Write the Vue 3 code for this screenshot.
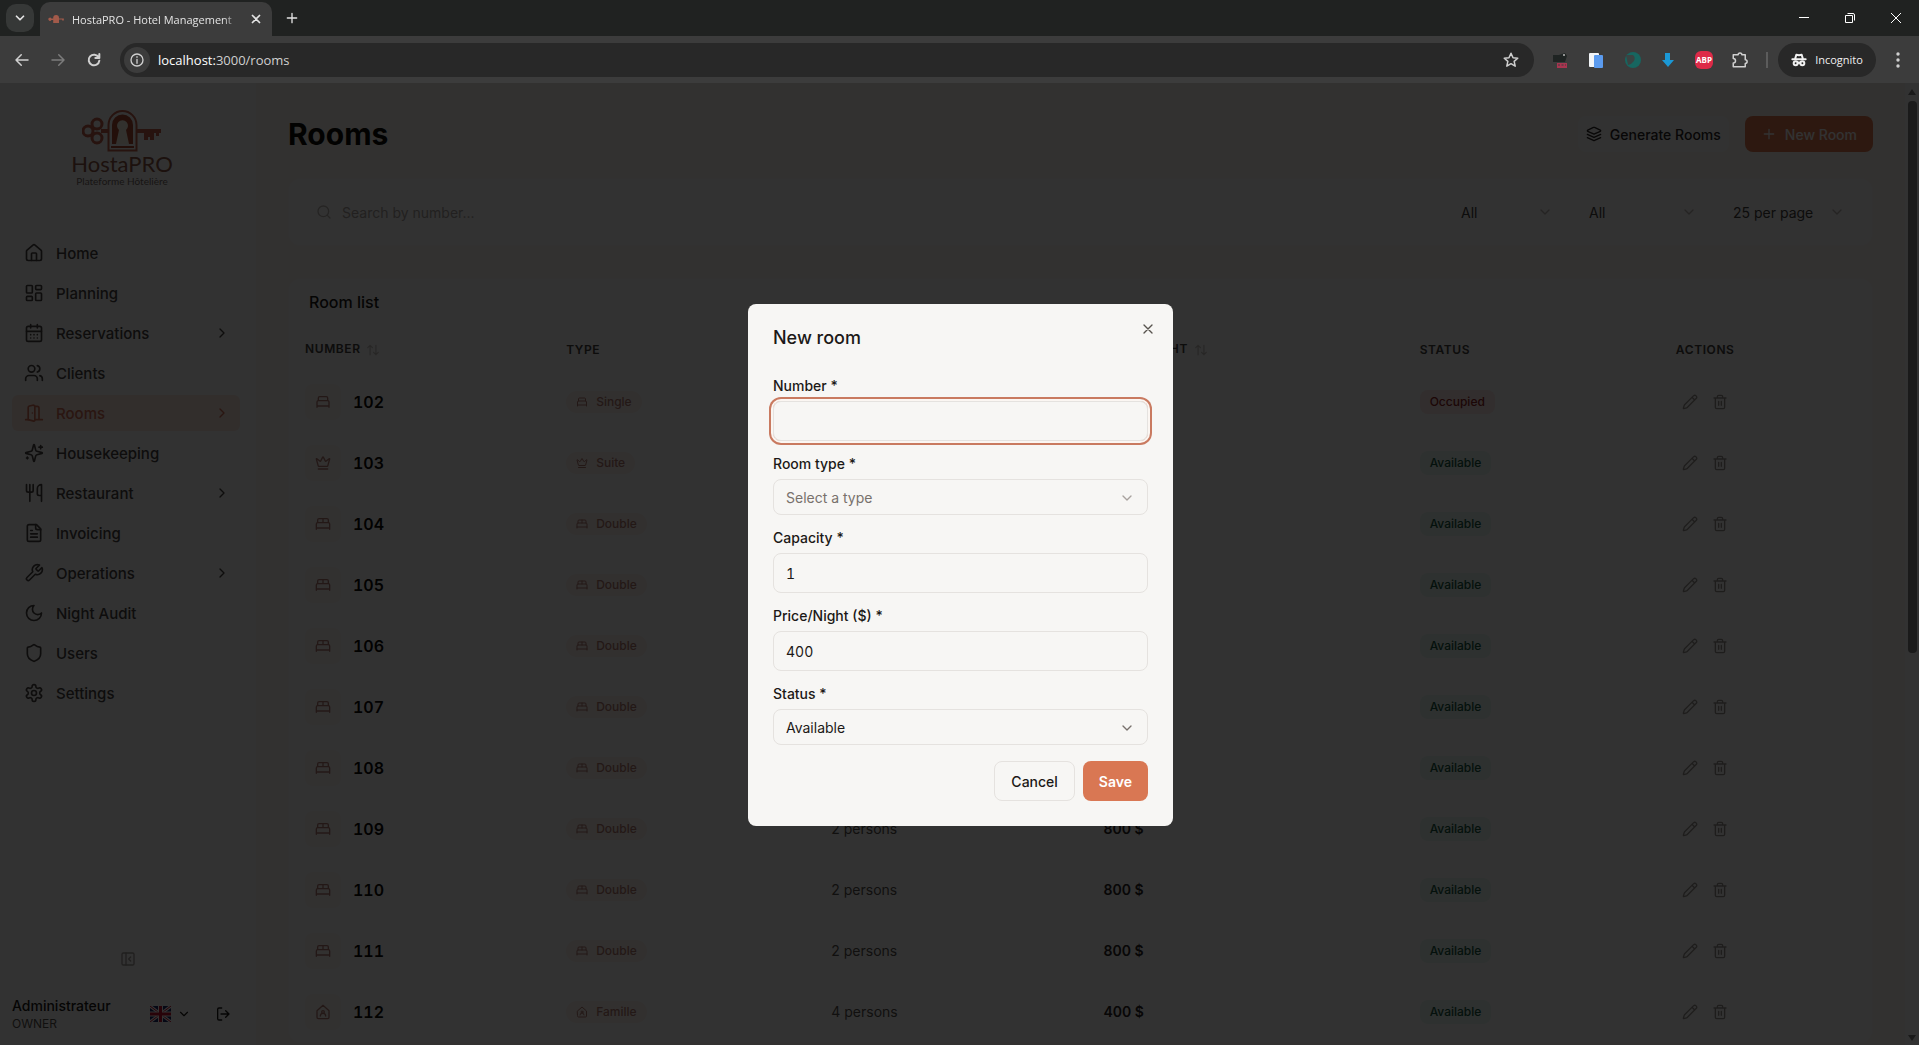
<script setup>
import { ref } from 'vue';

const icons = {
    home: '<path d="M15 21v-8a1 1 0 0 0-1-1h-4a1 1 0 0 0-1 1v8"/><path d="M3 10a2 2 0 0 1 .709-1.528l7-6a2 2 0 0 1 2.582 0l7 6A2 2 0 0 1 21 10v9a2 2 0 0 1-2 2H5a2 2 0 0 1-2-2z"/>',
    planning: '<rect width="7" height="9" x="3" y="3" rx="1"/><rect width="7" height="5" x="14" y="3" rx="1"/><rect width="7" height="9" x="14" y="12" rx="1"/><rect width="7" height="5" x="3" y="16" rx="1"/>',
    calendar: '<path d="M8 2v4M16 2v4"/><rect width="18" height="18" x="3" y="4" rx="2"/><path d="M3 10h18M8 14h.01M12 14h.01M16 14h.01M8 18h.01M12 18h.01M16 18h.01"/>',
    users: '<path d="M16 21v-2a4 4 0 0 0-4-4H6a4 4 0 0 0-4 4v2"/><circle cx="9" cy="7" r="4"/><path d="M22 21v-2a4 4 0 0 0-3-3.87M16 3.13a4 4 0 0 1 0 7.75"/>',
    door: '<path d="M13 4h3a2 2 0 0 1 2 2v14M2 20h3M13 20h9M10 12v.01"/><path d="M13 4.562v16.157a1 1 0 0 1-1.242.97L5 20V5.562a2 2 0 0 1 1.515-1.94l4-1A2 2 0 0 1 13 4.561Z"/>',
    sparkles: '<path d="M9.937 15.5A2 2 0 0 0 8.5 14.063l-6.135-1.582a.5.5 0 0 1 0-.962L8.5 9.936A2 2 0 0 0 9.937 8.5l1.582-6.135a.5.5 0 0 1 .963 0L14.063 8.5A2 2 0 0 0 15.5 9.937l6.135 1.581a.5.5 0 0 1 0 .964L15.5 14.063a2 2 0 0 0-1.437 1.437l-1.582 6.135a.5.5 0 0 1-.963 0z"/><path d="M20 3v4M22 5h-4M4 17v2M5 18H3"/>',
    utensils: '<path d="M3 2v7c0 1.1.9 2 2 2h4a2 2 0 0 0 2-2V2M7 2v20M21 15V2a5 5 0 0 0-5 5v6c0 1.1.9 2 2 2h3Zm0 0v7"/>',
    file: '<path d="M15 2H6a2 2 0 0 0-2 2v16a2 2 0 0 0 2 2h12a2 2 0 0 0 2-2V7Z"/><path d="M14 2v4a2 2 0 0 0 2 2h4M10 9H8M16 13H8M16 17H8"/>',
    wrench: '<path d="M14.7 6.3a1 1 0 0 0 0 1.4l1.6 1.6a1 1 0 0 0 1.4 0l3.77-3.77a6 6 0 0 1-7.94 7.94l-6.91 6.91a2.12 2.12 0 0 1-3-3l6.91-6.91a6 6 0 0 1 7.94-7.94l-3.76 3.76z"/>',
    moon: '<path d="M12 3a6 6 0 0 0 9 9 9 9 0 1 1-9-9Z"/>',
    shield: '<path d="M20 13c0 5-3.5 7.5-7.66 8.95a1 1 0 0 1-.67-.01C7.5 20.5 4 18 4 13V6a1 1 0 0 1 1-1c2 0 4.500-1.200 6.240-2.720a1.170 1.170 0 0 1 1.520 0C14.510 3.810 17 5 19 5a1 1 0 0 1 1 1z"/>',
    settings: '<path d="M12.220 2h-.44a2 2 0 0 0-2 2v.18a2 2 0 0 1-1 1.730l-.43.25a2 2 0 0 1-2 0l-.15-.08a2 2 0 0 0-2.730.73l-.22.38a2 2 0 0 0 .73 2.730l.15.1a2 2 0 0 1 1 1.720v.51a2 2 0 0 1-1 1.740l-.15.09a2 2 0 0 0-.73 2.730l.22.38a2 2 0 0 0 2.730.73l.15-.08a2 2 0 0 1 2 0l.43.25a2 2 0 0 1 1 1.730V20a2 2 0 0 0 2 2h.44a2 2 0 0 0 2-2v-.18a2 2 0 0 1 1-1.730l.43-.25a2 2 0 0 1 2 0l.15.08a2 2 0 0 0 2.730-.73l.22-.39a2 2 0 0 0-.73-2.730l-.15-.08a2 2 0 0 1-1-1.740v-.5a2 2 0 0 1 1-1.740l.15-.09a2 2 0 0 0 .73-2.730l-.22-.38a2 2 0 0 0-2.730-.73l-.15.08a2 2 0 0 1-2 0l-.43-.25a2 2 0 0 1-1-1.730V4a2 2 0 0 0-2-2z"/><circle cx="12" cy="12" r="3"/>',
    right: '<path d="m9 18 6-6-6-6"/>',
    down: '<path d="m6 9 6 6 6-6"/>',
    panel: '<rect width="18" height="18" x="3" y="3" rx="2"/><path d="M9 3v18M16 15l-3-3 3-3"/>',
    logout: '<path d="M10 3H6a2 2 0 0 0-2 2v14a2 2 0 0 0 2 2h4M16 17l5-5-5-5M21 12H9"/>',
    layers: '<path d="m12.830 2.180a2 2 0 0 0-1.660 0L2.600 6.080a1 1 0 0 0 0 1.830l8.580 3.910a2 2 0 0 0 1.660 0l8.580-3.900a1 1 0 0 0 0-1.830Z"/><path d="m22 12.500-9.170 4.160a2 2 0 0 1-1.660 0L2 12.500M22 17.500l-9.170 4.160a2 2 0 0 1-1.660 0L2 17.500"/>',
    plus: '<path d="M5 12h14M12 5v14"/>',
    search: '<circle cx="11" cy="11" r="8"/><path d="m21 21-4.300-4.300"/>',
    sort: '<path d="m3 8 4-4 4 4M7 4v16M13 16l4 4 4-4M17 20V4"/>',
    bedSingle: '<path d="M3 20v-8a2 2 0 0 1 2-2h14a2 2 0 0 1 2 2v8M5 10V6a2 2 0 0 1 2-2h10a2 2 0 0 1 2 2v4M3 18h18"/>',
    bedDouble: '<path d="M2 20v-8a2 2 0 0 1 2-2h16a2 2 0 0 1 2 2v8M4 10V6a2 2 0 0 1 2-2h12a2 2 0 0 1 2 2v4M12 4v6M2 18h20"/>',
    crown: '<path d="M11.560 3.270a.5.5 0 0 1 .88 0l2.950 5.600a1 1 0 0 0 1.520.29l4.280-3.660a.5.5 0 0 1 .8.520l-2.840 10.250a1 1 0 0 1-.95.730H5.810a1 1 0 0 1-.96-.73L2.020 6.020a.5.5 0 0 1 .8-.52l4.280 3.660a1 1 0 0 0 1.520-.29zM5 21h14"/>',
    family: '<path d="M3 10l9-8 9 8v10a2 2 0 0 1-2 2H5a2 2 0 0 1-2-2z"/><circle cx="12" cy="12" r="2"/><path d="M8 18a4 4 0 0 1 8 0"/>',
    pencil: '<path d="M21.170 6.810a1 1 0 0 0-3.980-3.980L3.840 16.170a2 2 0 0 0-.5.830l-1.320 4.350a.5.5 0 0 0 .62.620l4.350-1.320a2 2 0 0 0 .83-.5zM15 5l4 4"/>',
    trash: '<path d="M3 6h18M19 6v14a2 2 0 0 1-2 2H7a2 2 0 0 1-2-2V6M8 6V4a2 2 0 0 1 2-2h4a2 2 0 0 1 2 2v2M10 11v6M14 11v6"/>',
    close: '<path d="M18 6 6 18M6 6l12 12"/>',
    back: '<path d="M20 12H4M11 5l-7 7 7 7"/>',
    forward: '<path d="M4 12h16M13 5l7 7-7 7"/>',
    reload: '<path d="M19 8a8 8 0 1 0 1 5M20 3v6h-6"/>',
    info: '<circle cx="12" cy="12" r="9"/><path d="M12 11v6M12 7v1"/>',
    star: '<path d="m12 3 2.700 6 6.300.6-4.800 4.300 1.400 6.300L12 16.900l-5.600 3.300 1.400-6.300L3 9.600 9.300 9z"/>',
    puzzle: '<path d="M3 5h6.500a2.500 2.500 0 0 1 5 0H19v6.500a2.500 2.500 0 0 1 0 5V21H3v-5a3 3 0 0 0 0-6z"/>',
    incognito: '<path d="M2 11h20M6 11l2-7 4 1 4-1 2 7"/><circle cx="7" cy="17" r="3"/><circle cx="17" cy="17" r="3"/><path d="M10 17q2-2 4 0"/>'
};

const menu = [
    { label: 'Home', icon: 'home' },
    { label: 'Planning', icon: 'planning' },
    { label: 'Reservations', icon: 'calendar', sub: true },
    { label: 'Clients', icon: 'users' },
    { label: 'Rooms', icon: 'door', sub: true, active: true },
    { label: 'Housekeeping', icon: 'sparkles' },
    { label: 'Restaurant', icon: 'utensils', sub: true },
    { label: 'Invoicing', icon: 'file' },
    { label: 'Operations', icon: 'wrench', sub: true },
    { label: 'Night Audit', icon: 'moon' },
    { label: 'Users', icon: 'shield' },
    { label: 'Settings', icon: 'settings' }
];

const double = { type: 'Double', icon: 'bedDouble', persons: '2 persons', price: '800 $', status: 'Available' };

const rooms = [
    { number: 102, type: 'Single', icon: 'bedSingle', persons: '1 person', price: '400 $', status: 'Occupied' },
    { number: 103, type: 'Suite', icon: 'crown', persons: '2 persons', price: '800 $', status: 'Available' },
    ...[104, 105, 106, 107, 108, 109, 110, 111].map((number) => ({ number, ...double })),
    { number: 112, type: 'Famille', icon: 'family', persons: '4 persons', price: '400 $', status: 'Available' }
];

const search = ref('');
const form = ref({ number: '', type: '', capacity: '1', price: '400', status: 'Available' });
</script>

<template>
    <div class="browser">
        <!-- Tab strip -->
        <header class="tabs">
            <button class="tab-search" aria-label="Search tabs">
                <svg class="icon s14 bold" viewBox="0 0 24 24" v-html="icons.down"></svg>
            </button>
            <div class="tab">
                <svg class="favicon" viewBox="0 0 80 42" aria-hidden="true">
                    <path d="M26 41V15a14 14 0 0 1 29 0v26zM55 18h24v10h-8v-4H55zM26 18H17a8 8 0 1 0 0 8h9z" />
                </svg>
                <span class="tab-title">HostaPRO - Hotel Management</span>
                <button class="tab-close" aria-label="Close tab">
                    <svg class="icon s14 bold" viewBox="0 0 24 24" v-html="icons.close"></svg>
                </button>
            </div>
            <button class="tab-new" aria-label="New tab">
                <svg class="icon s16" viewBox="0 0 24 24" v-html="icons.plus"></svg>
            </button>
            <div class="window-controls">
                <button aria-label="Minimize"><svg viewBox="0 0 12 12"><path d="M1 5.500h10" /></svg></button>
                <button aria-label="Restore"><svg viewBox="0 0 12 12"><path d="M1.500 3.500h7v7h-7zM3.500 1.500H9a1.500 1.500 0 0 1 1.500 1.500v5.500" /></svg></button>
                <button aria-label="Close window"><svg viewBox="0 0 12 12"><path d="m1 1 10 10M11 1 1 11" /></svg></button>
            </div>
        </header>

        <!-- Address bar -->
        <div class="toolbar">
            <button aria-label="Back"><svg class="icon s18" viewBox="0 0 24 24" v-html="icons.back"></svg></button>
            <button aria-label="Forward" class="faded"><svg class="icon s18" viewBox="0 0 24 24" v-html="icons.forward"></svg></button>
            <button aria-label="Reload"><svg class="icon s16 bold" viewBox="0 0 24 24" v-html="icons.reload"></svg></button>
            <div class="omnibox">
                <span class="site-info"><svg class="icon s16" viewBox="0 0 24 24" v-html="icons.info"></svg></span>
                <span class="url"><b>localhost:</b>3000/rooms</span>
                <button aria-label="Bookmark"><svg class="icon s18" viewBox="0 0 24 24" v-html="icons.star"></svg></button>
            </div>
            <button aria-label="Capture extension">
                <svg class="s18" viewBox="0 0 18 18"><path d="M2 4h6l6-2 2 3-2 6H2z" fill="#1f2423" /><circle cx="13" cy="4" r="1" fill="#b8b8b8" /><path d="M6 12h10v5H6z" fill="#a83550" /><path d="M7 14h2M10.500 14h2M14 14h1" stroke="#3c3c3c" /></svg>
            </button>
            <button aria-label="Translate extension">
                <svg class="s18" viewBox="0 0 18 18"><rect x="2" y="2" width="10" height="14" rx="1" fill="#f2f5f8" /><rect x="7" y="4" width="9" height="13" rx="1" fill="#5b9bef" /></svg>
            </button>
            <button aria-label="Dark mode extension">
                <svg class="s18" viewBox="0 0 18 18"><circle cx="10" cy="9" r="8" fill="#176660" /><path d="M10 4a5 5 0 0 1 1 6q-2 3-6 4L3 4z" fill="#3a4342" /></svg>
            </button>
            <button aria-label="Downloads extension">
                <svg class="s18" viewBox="0 0 18 18"><path d="M6 2h5v7h4l-6 7-6-7h3z" fill="#1b98d5" /></svg>
            </button>
            <button aria-label="Ad blocker" class="abp">ABP</button>
            <button aria-label="Extensions"><svg class="icon s18" viewBox="0 0 24 24" v-html="icons.puzzle"></svg></button>
            <span class="divider"></span>
            <button class="incognito">
                <svg class="icon s16 bold" viewBox="0 0 24 24" v-html="icons.incognito"></svg>
                Incognito
            </button>
            <button aria-label="Menu">
                <svg class="s18" viewBox="0 0 18 18" fill="#d0d0d0"><circle cx="9" cy="3" r="1.700" /><circle cx="9" cy="9" r="1.700" /><circle cx="9" cy="15" r="1.700" /></svg>
            </button>
        </div>

        <div class="viewport">
            <aside class="sidebar">
                <div class="logo">
                    <svg viewBox="0 0 80 42" aria-hidden="true">
                        <g fill="none" stroke="#c0604a" stroke-width="3">
                            <circle cx="6" cy="21" r="5" />
                            <circle cx="15" cy="14" r="5" />
                            <circle cx="15" cy="28" r="5" />
                        </g>
                        <path d="M19 19h8v4h-8zM54 19h25v4h-2v3h-3v-3h-2v7h-4v-3h-2v3h-4v-7h-8z" fill="#c0604a" />
                        <path d="M26.500 40.500V15a14 14 0 0 1 28 0v25.500z" fill="none" stroke="#c0604a" stroke-width="2" />
                        <path d="M30 34V15a10.500 10.500 0 0 1 21 0v19zM29 36h23v2H29z" fill="#b04e36" />
                        <path d="M37 20a5.500 5.500 0 1 1 7 0l3 14H34z" fill="#faf4e4" />
                    </svg>
                    <span class="brand">HostaPRO</span>
                    <span class="tagline">Plateforme Hôtelière</span>
                </div>
                <nav class="menu">
                    <a v-for="item in menu" :key="item.label" href="#" :class="{ active: item.active }">
                        <svg class="icon s20" viewBox="0 0 24 24" v-html="icons[item.icon]"></svg>
                        <span>{{ item.label }}</span>
                        <svg v-if="item.sub" class="icon s16" viewBox="0 0 24 24" v-html="icons.right"></svg>
                    </a>
                </nav>
                <button class="collapse" aria-label="Collapse sidebar">
                    <svg class="icon s16" viewBox="0 0 24 24" v-html="icons.panel"></svg>
                </button>
                <div class="account">
                    <div class="who">
                        <strong>Administrateur</strong>
                        <span>OWNER</span>
                    </div>
                    <button class="lang" aria-label="Language">
                        <svg class="flag" viewBox="0 0 21 16">
                            <path d="M0 0h21v16H0z" fill="#1b2a6b" />
                            <path d="m0 0 21 16M21 0 0 16" stroke="#fff" stroke-width="3" />
                            <path d="m0 0 21 16M21 0 0 16" stroke="#c8102e" />
                            <path d="M10.500 0v16M0 8h21" stroke="#fff" stroke-width="5" />
                            <path d="M10.500 0v16M0 8h21" stroke="#c8102e" stroke-width="3" />
                        </svg>
                        <svg class="icon s14" viewBox="0 0 24 24" v-html="icons.down"></svg>
                    </button>
                    <button class="logout" aria-label="Log out">
                        <svg class="icon s16" viewBox="0 0 24 24" v-html="icons.logout"></svg>
                    </button>
                </div>
            </aside>

            <main class="content">
                <div class="page-head">
                    <h1>Rooms</h1>
                    <button class="btn plain">
                        <svg class="icon s16" viewBox="0 0 24 24" v-html="icons.layers"></svg>
                        Generate Rooms
                    </button>
                    <button class="btn solid">
                        <svg class="icon s16" viewBox="0 0 24 24" v-html="icons.plus"></svg>
                        New Room
                    </button>
                </div>

                <div class="card filters">
                    <label class="search">
                        <svg class="icon s16" viewBox="0 0 24 24" v-html="icons.search"></svg>
                        <input v-model="search" type="text" placeholder="Search by number..." />
                    </label>
                    <div class="filter type-filter">
                        <select aria-label="Type"><option>All</option></select>
                        <svg class="icon s16" viewBox="0 0 24 24" v-html="icons.down"></svg>
                    </div>
                    <div class="filter status-filter">
                        <select aria-label="Status"><option>All</option></select>
                        <svg class="icon s16" viewBox="0 0 24 24" v-html="icons.down"></svg>
                    </div>
                    <div class="filter page-filter">
                        <select aria-label="Page size"><option>25 per page</option></select>
                        <svg class="icon s16" viewBox="0 0 24 24" v-html="icons.down"></svg>
                    </div>
                </div>

                <section class="card list">
                    <h2>Room list</h2>
                    <table>
                        <colgroup>
                            <col class="c-number" />
                            <col class="c-type" />
                            <col class="c-capacity" />
                            <col class="c-price" />
                            <col class="c-status" />
                            <col class="c-actions" />
                        </colgroup>
                        <thead>
                            <tr>
                                <th>NUMBER <svg class="icon s14 sort" viewBox="0 0 24 24" v-html="icons.sort"></svg></th>
                                <th>TYPE</th>
                                <th>CAPACITY</th>
                                <th>PRICE/NIGHT <svg class="icon s14 sort" viewBox="0 0 24 24" v-html="icons.sort"></svg></th>
                                <th>STATUS</th>
                                <th>ACTIONS</th>
                            </tr>
                        </thead>
                        <tbody>
                            <tr v-for="room in rooms" :key="room.number">
                                <td>
                                    <div class="room">
                                        <span class="tile"><svg class="icon s16" viewBox="0 0 24 24" v-html="icons[room.icon]"></svg></span>
                                        <strong>{{ room.number }}</strong>
                                    </div>
                                </td>
                                <td>
                                    <span class="badge kind">
                                        <svg class="icon s12" viewBox="0 0 24 24" v-html="icons[room.icon]"></svg>
                                        {{ room.type }}
                                    </span>
                                </td>
                                <td class="persons">{{ room.persons }}</td>
                                <td class="price">{{ room.price }}</td>
                                <td><span class="badge status" :class="room.status.toLowerCase()">{{ room.status }}</span></td>
                                <td>
                                    <div class="actions">
                                        <button aria-label="Edit"><svg class="icon s16" viewBox="0 0 24 24" v-html="icons.pencil"></svg></button>
                                        <button aria-label="Delete"><svg class="icon s16" viewBox="0 0 24 24" v-html="icons.trash"></svg></button>
                                    </div>
                                </td>
                            </tr>
                        </tbody>
                    </table>
                </section>
            </main>

            <div class="scrollbar">
                <span class="arrow up"></span>
                <span class="thumb"></span>
                <span class="arrow down"></span>
            </div>

            <!-- New room dialog -->
            <div class="overlay">
                <form class="dialog" role="dialog" aria-labelledby="dialog-title" @submit.prevent>
                    <button type="button" class="dialog-close" aria-label="Close">
                        <svg class="icon s16" viewBox="0 0 24 24" v-html="icons.close"></svg>
                    </button>
                    <h2 id="dialog-title">New room</h2>
                    <div class="fields">
                        <div class="field">
                            <label for="number">Number *</label>
                            <input id="number" v-model="form.number" type="text" class="focused" />
                        </div>
                        <div class="field">
                            <label for="type">Room type *</label>
                            <div class="picker empty">
                                <select id="type" v-model="form.type">
                                    <option value="">Select a type</option>
                                    <option>Single</option>
                                    <option>Double</option>
                                    <option>Suite</option>
                                    <option>Famille</option>
                                </select>
                                <svg class="icon s16" viewBox="0 0 24 24" v-html="icons.down"></svg>
                            </div>
                        </div>
                        <div class="field">
                            <label for="capacity">Capacity *</label>
                            <input id="capacity" v-model="form.capacity" type="text" inputmode="numeric" />
                        </div>
                        <div class="field">
                            <label for="price">Price/Night ($) *</label>
                            <input id="price" v-model="form.price" type="text" inputmode="numeric" />
                        </div>
                        <div class="field">
                            <label for="status">Status *</label>
                            <div class="picker">
                                <select id="status" v-model="form.status">
                                    <option>Available</option>
                                    <option>Occupied</option>
                                </select>
                                <svg class="icon s16" viewBox="0 0 24 24" v-html="icons.down"></svg>
                            </div>
                        </div>
                        <div class="dialog-actions">
                            <button type="button" class="cancel">Cancel</button>
                            <button type="submit" class="save">Save</button>
                        </div>
                    </div>
                </form>
            </div>
        </div>
    </div>
</template>

<style>
body {
    background: #323232;
}
</style>

<style scoped>
* {
    box-sizing: border-box;
}

.browser {
    height: 100vh;
    display: flex;
    flex-direction: column;
    overflow: hidden;
    font-family: Inter, sans-serif;
    font-size: 14px;
    color: #1c1917;
}

button,
input,
select {
    font: inherit;
    color: inherit;
    background: none;
    border: none;
    padding: 0;
    margin: 0;
    outline: none;
}

button {
    display: flex;
    align-items: center;
    justify-content: center;
    cursor: pointer;
}

select {
    appearance: none;
    width: 100%;
    height: 100%;
    padding: 0 12px;
}

.icon {
    fill: none;
    stroke: currentColor;
    stroke-width: 2;
    stroke-linecap: round;
    stroke-linejoin: round;
    flex-shrink: 0;
}

.icon.bold {
    stroke-width: 3;
}

.s12 { width: 12px; height: 12px; }
.s14 { width: 14px; height: 14px; }
.s16 { width: 16px; height: 16px; }
.s18 { width: 18px; height: 18px; }
.s20 { width: 20px; height: 20px; }

/* Browser frame */
.tabs {
    display: flex;
    align-items: center;
    height: 36px;
    padding-left: 6px;
    background: #202221;
    color: #e3e3e3;
    font-family: "Open Sans", sans-serif;
    font-size: 11px;
    flex-shrink: 0;
}

.tab-search {
    width: 28px;
    height: 28px;
    margin-right: 6px;
    border-radius: 10px;
    background: #363837;
}

.tab {
    display: flex;
    align-items: center;
    align-self: flex-end;
    gap: 8px;
    width: 232px;
    height: 34px;
    padding: 0 8px;
    border-radius: 10px 10px 0 0;
    background: #3c3c3c;
}

.favicon {
    width: 16px;
    height: 10px;
    fill: #a25a4a;
    flex-shrink: 0;
}

.tab-title {
    flex: 1;
    overflow: hidden;
    white-space: nowrap;
    mask-image: linear-gradient(to right, #000 90%, transparent);
}

.tab-close {
    width: 16px;
    height: 16px;
}

.tab-new {
    width: 28px;
    height: 28px;
    margin-left: 6px;
}

.window-controls {
    display: flex;
    margin-left: auto;
}

.window-controls button {
    width: 46px;
    height: 32px;
}

.window-controls svg {
    width: 12px;
    height: 12px;
    fill: none;
    stroke: #fff;
}

.toolbar {
    display: flex;
    align-items: center;
    gap: 16px;
    height: 47px;
    padding: 0 11px 0 12px;
    background: #3c3c3c;
    color: #d0d0d0;
    font-family: "Open Sans", sans-serif;
    font-size: 13px;
    flex-shrink: 0;
}

.toolbar > button {
    width: 20px;
    height: 20px;
}

.toolbar .faded {
    color: #7c7c7c;
}

.omnibox {
    display: flex;
    align-items: center;
    flex: 1;
    gap: 8px;
    height: 34px;
    padding: 0 14px 0 4px;
    border-radius: 17px;
    background: #282828;
}

.site-info {
    display: flex;
    align-items: center;
    justify-content: center;
    width: 26px;
    height: 26px;
    border-radius: 13px;
    background: #3c3c3c;
}

.url {
    flex: 1;
}

.url b {
    font-weight: 400;
    color: #fff;
}

.toolbar .abp {
    width: 18px;
    height: 18px;
    margin: 0 1px;
    border-radius: 6px;
    background: #dd2a48;
    color: #fff;
    font-size: 8px;
    font-weight: 700;
}

.divider {
    width: 2px;
    height: 16px;
    background: #5c5c5c;
}

.toolbar .incognito {
    gap: 8px;
    width: 98px;
    height: 34px;
    margin: 0 -4px 0 -6px;
    border-radius: 17px;
    background: #282828;
    color: #f1f1f1;
    font-size: 11px;
}

/* Page */
.viewport {
    position: relative;
    display: flex;
    flex: 1;
    min-height: 0;
    background: #faf6ee;
}

.sidebar {
    display: flex;
    flex-direction: column;
    width: 256px;
    background: #fafafa;
    flex-shrink: 0;
}

.logo {
    display: flex;
    flex-direction: column;
    align-items: center;
    height: 152px;
    padding: 27px 12px 0 0;
}

.logo svg {
    width: 80px;
    height: 42px;
}

.brand {
    font-family: Lato, sans-serif;
    font-size: 22px;
    line-height: 24px;
    color: #8d5846;
}

.tagline {
    font-family: Lato, sans-serif;
    font-size: 10px;
    line-height: 10px;
    color: #766a66;
}

.menu {
    display: flex;
    flex-direction: column;
    flex: 1;
    gap: 4px;
    padding: 0 16px 0 12px;
}

.menu a {
    display: flex;
    align-items: center;
    gap: 12px;
    height: 36px;
    padding: 0 10px 0 12px;
    border-radius: 6px;
    font-size: 15px;
    font-weight: 500;
    color: #484441;
    text-decoration: none;
}

.menu a span {
    flex: 1;
}

.menu a.active {
    background: #fbe4dd;
    color: #cf6e55;
}

.collapse {
    align-self: center;
    width: 28px;
    height: 28px;
    margin-bottom: 10px;
    color: #a09a96;
}

.account {
    display: flex;
    align-items: center;
    height: 62px;
    padding: 0 25px 0 12px;
}

.who {
    display: flex;
    flex-direction: column;
    flex: 1;
}

.who strong {
    font-weight: 500;
    line-height: 20px;
}

.who span {
    font-size: 12px;
    line-height: 16px;
    color: #57534e;
}

.lang {
    gap: 6px;
    margin-right: 24px;
}

.flag {
    width: 21px;
    height: 16px;
}

.content {
    display: flex;
    flex-direction: column;
    flex: 1;
    min-width: 0;
    padding: 33px 32px;
    overflow: hidden;
}

.page-head {
    display: flex;
    align-items: center;
    gap: 16px;
    height: 36px;
    margin-bottom: 26px;
    flex-shrink: 0;
}

.page-head h1 {
    flex: 1;
    margin: 0;
    font-size: 30px;
    font-weight: 700;
    color: #0c0a09;
}

.btn {
    gap: 8px;
    height: 36px;
    border-radius: 8px;
    font-weight: 500;
}

.btn.plain {
    padding: 0 8px;
    background: #fafafa;
    color: #292524;
}

.btn.solid {
    padding: 0 16px;
    background: #e07850;
    color: #fafafa;
}

.card {
    border: 1px solid #f7f6f5;
    border-radius: 12px;
    background: #fafafa;
    flex-shrink: 0;
}

.filters {
    display: flex;
    gap: 12px;
    height: 68px;
    padding: 15px;
    margin-bottom: 32px;
}

.search {
    display: flex;
    align-items: center;
    flex: 1;
    gap: 10px;
    padding: 0 12px;
    color: #b8b3af;
}

.search input {
    flex: 1;
}

.search input::placeholder {
    color: #a8a29e;
}

.filter {
    position: relative;
    height: 36px;
    color: #44403c;
}

.filter svg,
.picker svg {
    position: absolute;
    top: 10px;
    right: 12px;
    color: #b8b3af;
    pointer-events: none;
}

.type-filter { width: 116px; }
.status-filter { width: 132px; }
.page-filter { width: 136px; }

.list h2 {
    margin: 0;
    padding: 0 20px 2px;
    font-size: 16px;
    font-weight: 500;
    line-height: 46px;
}

table {
    width: 100%;
    border-collapse: collapse;
    table-layout: fixed;
}

.c-number { width: 261px; }
.c-type { width: 265px; }
.c-capacity { width: 272px; }
.c-price { width: 316px; }
.c-status { width: 256px; }
.c-actions { width: 212px; }

th {
    height: 44px;
    padding: 0 16px;
    background: #f7f7f7;
    font-size: 12px;
    font-weight: 600;
    letter-spacing: 0.05em;
    text-align: left;
    color: #44403c;
}

.sort {
    margin-left: 2px;
    vertical-align: middle;
    color: #c4bfbb;
}

td {
    height: 61px;
    padding: 0 16px;
}

.room {
    display: flex;
    align-items: center;
    gap: 12px;
}

.room strong {
    font-size: 16px;
    font-weight: 600;
    font-variant-numeric: tabular-nums;
    color: #0c0a09;
}

.tile {
    display: flex;
    align-items: center;
    justify-content: center;
    width: 36px;
    height: 36px;
    border-radius: 8px;
    background: #fbf2f0;
    color: #b07a70;
}

.badge {
    display: inline-flex;
    align-items: center;
    gap: 8px;
    height: 22px;
    padding: 0 10px;
    border-radius: 11px;
    font-size: 12px;
    font-weight: 500;
}

.kind {
    background: #fbeeea;
    color: #b07a70;
}

.status {
    height: 24px;
    border-radius: 8px;
}

.status.available {
    background: #e4f5ee;
    color: #17583f;
}

.status.occupied {
    background: #fbe3e3;
    color: #8c2323;
}

.persons {
    color: #57534e;
}

.price {
    font-weight: 600;
    color: #292524;
}

.actions {
    display: flex;
    gap: 2px;
    color: #98928e;
}

.actions button {
    width: 28px;
    height: 28px;
}

.scrollbar {
    display: flex;
    flex-direction: column;
    align-items: center;
    gap: 6px;
    width: 14px;
    padding: 6px 0 4px;
    background: #fafafa;
    flex-shrink: 0;
}

.thumb {
    width: 9px;
    height: 58%;
    border-radius: 4px;
    background: #808080;
}

.arrow {
    border: 4px solid transparent;
}

.arrow.up {
    border-top: none;
    border-bottom: 6px solid #808080;
}

.arrow.down {
    margin-top: auto;
    border-bottom: none;
    border-top: 6px solid #808080;
}

/* Dialog */
.overlay {
    position: absolute;
    inset: 0;
    display: flex;
    align-items: center;
    justify-content: center;
    padding: 2px 0 0 2px;
    background: rgba(0, 0, 0, 0.8);
}

.dialog {
    position: relative;
    width: 425px;
    padding: 25px;
    border-radius: 8px;
    background: #f7f6f4;
}

.dialog h2 {
    margin: 0 0 32px;
    font-size: 18px;
    font-weight: 500;
    line-height: 18px;
}

.dialog-close {
    position: absolute;
    top: 17px;
    right: 17px;
    color: #57534e;
}

.fields {
    display: flex;
    flex-direction: column;
    gap: 16px;
}

.field {
    display: flex;
    flex-direction: column;
    gap: 8px;
}

.field label {
    font-weight: 500;
    line-height: 14px;
}

.field input {
    width: 100%;
    height: 40px;
    padding: 0 12px;
    border: 1px solid #e5e2df;
    border-radius: 8px;
    font-variant-numeric: tabular-nums;
}

.field input.focused {
    box-shadow: 0 0 0 2px #fbf6f2, 0 0 0 4px #c97a60;
}

.picker {
    position: relative;
    height: 36px;
    border: 1px solid #e5e2df;
    border-radius: 8px;
}

.picker svg {
    color: #78716c;
}

.picker.empty {
    color: #78716c;
}

.picker.empty svg {
    color: #a8a29e;
}

.dialog-actions {
    display: flex;
    justify-content: flex-end;
    gap: 8px;
}

.dialog-actions button {
    height: 40px;
    padding: 0 16px;
    border-radius: 8px;
    font-weight: 500;
}

.dialog-actions .cancel {
    border: 1px solid #e5e2df;
}

.dialog-actions .save {
    background: #d97753;
    color: #fff;
    font-weight: 600;
}
</style>
